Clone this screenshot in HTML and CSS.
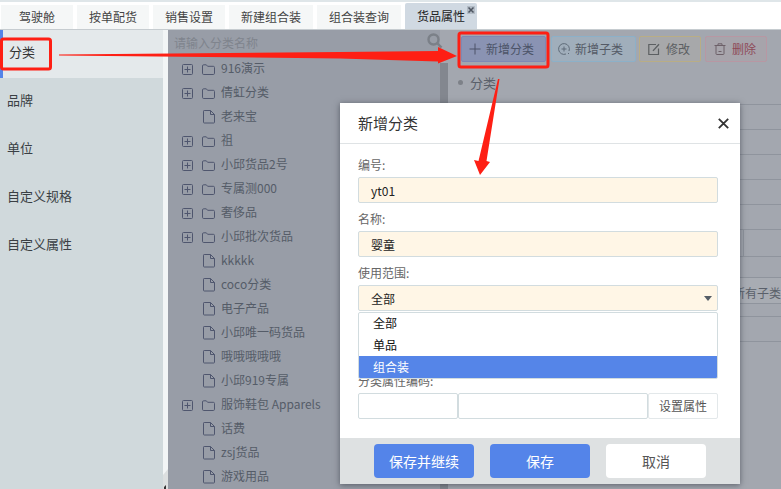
FILE: index.html
```html
<!DOCTYPE html>
<html lang="en">
<head>
  <meta charset="UTF-8">
  <title>货品属性</title>
  <link rel="stylesheet" href="styles.css">
</head>
<body>

  <svg class="defs" width="0" height="0">
    <symbol id="i-plus-box" viewBox="0 0 11 11"><path d="M.5 1.5a1 1 0 0 1 1-1h8a1 1 0 0 1 1 1v8a1 1 0 0 1-1 1h-8a1 1 0 0 1-1-1zM5.5 2.5v6M2.5 5.5h6" fill="none" stroke="#4f566e"/></symbol>
    <symbol id="i-folder" viewBox="0 0 13 11"><path d="M.5 2a1.2 1.2 0 0 1 1.2-1.2h2.6l1.3 1.5h5.7a1.2 1.2 0 0 1 1.2 1.2v5.8a1.2 1.2 0 0 1-1.2 1.2H1.7A1.2 1.2 0 0 1 .5 9.3z" fill="none" stroke="#4f566e"/></symbol>
    <symbol id="i-file" viewBox="0 0 12 14"><path d="M.5 1.2a.7.7 0 0 1 .7-.7h6.3l4 4v7.8a.7.7 0 0 1-.7.7H1.2a.7.7 0 0 1-.7-.7zM7.5.5v4h4" fill="none" stroke="#4f566e"/></symbol>
  </svg>

  <div class="tabs-strip"></div>
  <nav class="tabs">
    <a class="tab">驾驶舱</a>
    <a class="tab">按单配货</a>
    <a class="tab">销售设置</a>
    <a class="tab">新建组合装</a>
    <a class="tab">组合装查询</a>
    <a class="tab active">货品属性
      <svg class="tab-close" width="8" height="8" viewBox="0 0 8 8"><rect width="8" height="8" fill="#b3bcc6"/><path d="M1.5 1.5l5 5M6.5 1.5l-5 5" stroke="#4e5661" stroke-width="1.5"/></svg>
    </a>
  </nav>

  <div class="main">
    <aside class="sidebar">
      <div class="side-item active">分类</div>
      <div class="side-item">品牌</div>
      <div class="side-item">单位</div>
      <div class="side-item">自定义规格</div>
      <div class="side-item">自定义属性</div>
    </aside>
    <div class="splitter">
      <svg class="grip" width="5" height="20" viewBox="0 0 5 20"><path d="M0 6L5 0V20H0z" fill="#dcdfe0"/><path d="M1 18l2-2v4H1z" fill="#333"/></svg>
    </div>

    <section class="tree-panel">
      <div class="tree-search">
        <span class="placeholder">请输入分类名称</span>
        <svg class="search-icon" width="16" height="15" viewBox="0 0 16 15"><circle cx="6.5" cy="6.5" r="5" fill="none" stroke="#7b8088" stroke-width="2.4"/><path d="M10.5 10.5l4 4" stroke="#7b8088" stroke-width="2.4"/></svg>
      </div>
      <ul class="tree">
        <li class="node"><svg class="box"><use href="#i-plus-box"/></svg><svg class="folder"><use href="#i-folder"/></svg><span>916演示</span></li>
        <li class="node"><svg class="box"><use href="#i-plus-box"/></svg><svg class="folder"><use href="#i-folder"/></svg><span>倩虹分类</span></li>
        <li class="node leaf"><svg class="file"><use href="#i-file"/></svg><span>老来宝</span></li>
        <li class="node"><svg class="box"><use href="#i-plus-box"/></svg><svg class="folder"><use href="#i-folder"/></svg><span>祖</span></li>
        <li class="node"><svg class="box"><use href="#i-plus-box"/></svg><svg class="folder"><use href="#i-folder"/></svg><span>小邱货品2号</span></li>
        <li class="node"><svg class="box"><use href="#i-plus-box"/></svg><svg class="folder"><use href="#i-folder"/></svg><span>专属测000</span></li>
        <li class="node"><svg class="box"><use href="#i-plus-box"/></svg><svg class="folder"><use href="#i-folder"/></svg><span>奢侈品</span></li>
        <li class="node"><svg class="box"><use href="#i-plus-box"/></svg><svg class="folder"><use href="#i-folder"/></svg><span>小邱批次货品</span></li>
        <li class="node leaf"><svg class="file"><use href="#i-file"/></svg><span>kkkkk</span></li>
        <li class="node leaf"><svg class="file"><use href="#i-file"/></svg><span>coco分类</span></li>
        <li class="node leaf"><svg class="file"><use href="#i-file"/></svg><span>电子产品</span></li>
        <li class="node leaf"><svg class="file"><use href="#i-file"/></svg><span>小邱唯一码货品</span></li>
        <li class="node leaf"><svg class="file"><use href="#i-file"/></svg><span>哦哦哦哦哦</span></li>
        <li class="node leaf"><svg class="file"><use href="#i-file"/></svg><span>小邱919专属</span></li>
        <li class="node"><svg class="box"><use href="#i-plus-box"/></svg><svg class="folder"><use href="#i-folder"/></svg><span>服饰鞋包 Apparels</span></li>
        <li class="node leaf"><svg class="file"><use href="#i-file"/></svg><span>话费</span></li>
        <li class="node leaf"><svg class="file"><use href="#i-file"/></svg><span>zsj货品</span></li>
        <li class="node leaf"><svg class="file"><use href="#i-file"/></svg><span>游戏用品</span></li>
      </ul>
    </section>
    <div class="scrollbar"><div class="thumb"></div></div>

    <section class="detail">
      <div class="toolbar">
        <button class="tool tool-add">
          <svg width="12" height="12" viewBox="0 0 12 12"><path d="M6 .5v11M.5 6h11" stroke="#4c5368" fill="none"/></svg>新增分类
        </button>
        <button class="tool tool-sub">
          <svg width="12" height="12" viewBox="0 0 12 12"><path d="M11 8A5.4 5.4 0 1 0 8 11M6 3.5v5M3.5 6h5M10 10.500h1" stroke="#5f6b78" fill="none"/></svg>新增子类
        </button>
        <button class="tool tool-edit">
          <svg width="12" height="12" viewBox="0 0 12 12"><path d="M8 1.500H.8v10h9.700V5.500" stroke="#5c5f62" fill="none" stroke-width="1.200"/><path d="M4.500 7.500L10.500.800l1 1L5.500 8.300z" fill="#5c5f62"/></svg>修改
        </button>
        <button class="tool tool-del">
          <svg width="12" height="12" viewBox="0 0 12 12"><path d="M.5 2.500h11M4 2.500V.8h4v1.700M2 2.500v8.200a.8.8 0 0 0 .8.8h6.400a.8.8 0 0 0 .8-.8V2.500M4.500 8.500h3" stroke="#6d6068" fill="none"/></svg>删除
        </button>
      </div>
      <div class="crumb"><i class="dot"></i>分类</div>
      <div class="rows">
        <div class="row"></div>
        <div class="row"></div>
        <div class="row"></div>
        <div class="row"></div>
        <div class="row"></div>
        <div class="row row-split"></div>
        <div class="row row-gap"></div>
        <div class="row row-note">所有子类</div>
        <div class="row row-thin"></div>
        <div class="row"></div>
      </div>
    </section>
  </div>

  <!-- dialog -->
  <div class="modal">
    <header class="modal-head">
      <span>新增分类</span>
      <svg width="11" height="11" viewBox="0 0 11 11"><path d="M.8.800l9.400 9.400M10.200.800L.8 10.200" stroke="#333" stroke-width="1.800"/></svg>
    </header>
    <div class="modal-body">
      <div class="field">
        <label>编号:</label>
        <div class="input">yt01</div>
      </div>
      <div class="field">
        <label>名称:</label>
        <div class="input">婴童</div>
      </div>
      <div class="field select-field">
        <label>使用范围:</label>
        <div class="input select">全部<i class="caret"></i></div>
        <ul class="dropdown">
          <li>全部</li>
          <li>单品</li>
          <li class="selected">组合装</li>
        </ul>
      </div>
      <div class="field">
        <label></label>
        <div class="input blank"></div>
      </div>
      <div class="field">
        <label>分类属性编码:</label>
        <div class="attr-row">
          <div class="input blank attr-code"></div>
          <div class="input blank attr-name"></div>
          <button class="attr-btn">设置属性</button>
        </div>
      </div>
    </div>
    <footer class="modal-foot">
      <button class="btn btn-primary">保存并继续</button>
      <button class="btn btn-primary">保存</button>
      <button class="btn">取消</button>
    </footer>
  </div>

  <!-- red annotations drawn on the screenshot -->
  <svg class="marks" width="781" height="489" viewBox="0 0 781 489">
    <rect x="1.500" y="39" width="49" height="30" rx="2" fill="none" stroke="#fe1f14" stroke-width="3"/>
    <rect x="459" y="33" width="89" height="34" rx="2" fill="none" stroke="#fe1f14" stroke-width="3"/>
    <path d="M59 54.500L340 52L438 51V47L457 56L438 63.500V61.500L340 58.500L59 55.500z" fill="#fe1f14"/>
    <path d="M498 79L499.500 79L486.500 161L490 162L480 175L474 160L478.500 161z" fill="#fe1f14"/>
  </svg>

</body>
</html>
```

FILE: styles.css
```css
* { box-sizing: border-box; }
html, body { height: 100%; }
body {
  margin: 0;
  background: #fff;
  font-family: "Noto Sans CJK SC", "Noto Sans", sans-serif;
  font-size: 12px;
  line-height: 18px;
  color: #333;
  overflow: hidden;
  display: flex;
  flex-direction: column;
  position: relative;
}
ul { list-style: none; margin: 0; padding: 0; }
button { font: inherit; padding: 0; cursor: pointer; }
.defs { position: absolute; }

/* tabs */
.tabs-strip { height: 2px; background: #dfe6e9; flex: none; }
.tabs {
  flex: none;
  height: 28px;
  display: flex;
  align-items: flex-end;
  gap: 4px;
  padding-left: 1px;
  border-bottom: 1px solid #c6ccd0;
}
.tab {
  height: 24px;
  min-width: 72px;
  padding: 0 12px;
  line-height: 23px;
  text-align: center;
  background: #f5f7f7;
  color: #444;
  position: relative;
}
.tab.active {
  height: 26px;
  line-height: 25px;
  background: #d0d9e2;
  color: #222;
  border-radius: 2px 2px 0 0;
}
.tab-close { position: absolute; right: 2px; top: 3px; }

/* main area */
.main { flex: 1; display: flex; min-height: 0; }

.sidebar { width: 163px; flex: none; background: #d0d9dc; color: #3a3f44; }
.side-item {
  height: 48px;
  line-height: 43px;
  font-size: 13px;
  padding-left: 7px;
}
.side-item.active {
  background: #e4e9eb;
  border-left: 3px solid #5484e9;
  padding-left: 6px;
  color: #333;
}
.splitter { width: 5px; flex: none; background: #f2f5f6; display: flex; align-items: flex-end; }
.grip { display: block; }

.tree-panel { width: 272px; flex: none; background: #989da7; color: #555c68; }
.tree-search { height: 27px; padding: 4px 6px 0; position: relative; }
.placeholder { color: #7f848d; }
.search-icon { position: absolute; right: -3px; top: 3px; }
.node {
  height: 24px;
  display: flex;
  align-items: center;
  padding-left: 14px;
}
.node span { white-space: nowrap; margin-top: -2px; }
.box { width: 11px; height: 11px; margin-right: 9px; }
.folder { width: 13px; height: 11px; margin-right: 6px; }
.leaf { padding-left: 35px; }
.file { width: 12px; height: 14px; margin-right: 6px; }

.scrollbar { width: 8px; flex: none; background: #a3a7af; padding-top: 33px; }
.thumb { height: 100%; background: #83878f; }

.detail { flex: 1; min-width: 0; background: #a3a7af; color: #5a606a; overflow: hidden; }
.toolbar { display: flex; padding: 6px 0 0 13px; height: 38px; }
.tool {
  height: 26px;
  display: flex;
  align-items: center;
  gap: 6px;
  border-radius: 2px;
  border: 1px solid;
  margin-right: 4px;
  color: #545a66;
}
.tool svg { flex: none; }
.tool-add { width: 85px; padding-left: 7px; gap: 5px; background: #8a93b3; border-color: #7e89b4; color: #4c5368; }
.tool-sub { width: 85px; padding-left: 6px; gap: 5px; background: #a0aebb; border-color: #8cb0c8; margin-left: 1px; margin-right: 3px; }
.tool-edit { width: 62px; padding-left: 8px; background: #a7a8aa; border-color: #b9ad85; color: #5c5f62; }
.tool-del { width: 62px; padding-left: 8px; background: #a7a4ab; border-color: #b897a3; color: #8e4a58; }

.crumb { height: 28px; padding: 6px 0 0 10px; font-size: 13px; display: flex; align-items: flex-start; gap: 7px; }
.dot { width: 5px; height: 5px; border-radius: 50%; background: #7d8188; margin-top: 6px; }

.rows { border-top: 1px solid #8f949d; margin-top: 8px; }
.row { height: 25px; border-bottom: 1px solid #8f949d; white-space: nowrap; overflow: hidden; }
.row-split { height: 27px; position: relative; }
.row-split::after { content: ""; position: absolute; top: 0; bottom: 0; left: 295px; border-left: 1px solid #8f949d; }
.row-gap { height: 21px; }
.row-note { height: 26px; padding-left: 285px; line-height: 29px; background: #a8acb3; }
.row-thin { height: 13px; }

/* dialog */
.modal {
  position: absolute;
  left: 340px;
  top: 103px;
  width: 400px;
  height: 381px;
  background: #fff;
  box-shadow: 0 1px 6px rgba(30, 35, 45, .55);
  display: flex;
  flex-direction: column;
}
.modal-head {
  flex: none;
  height: 41px;
  padding: 0 11px 0 18px;
  border-bottom: 1px solid #dfe3e5;
  display: flex;
  align-items: center;
  justify-content: space-between;
  font-size: 15px;
  color: #333;
}
.modal-body { flex: 1; padding: 5px 22px 0 18px; min-height: 0; }
.field { position: relative; }
.field label { display: block; height: 28px; padding-top: 7px; color: #666; }
.input {
  height: 26px;
  line-height: 25px;
  padding: 0 12px;
  background: #fff6e6;
  border: 1px solid #d2dcdf;
  border-radius: 2px;
  color: #222;
  position: relative;
}
.blank { background: #fff; }
.caret {
  position: absolute;
  right: 5px;
  top: 10px;
  border-style: solid;
  border-width: 5px 4px 0;
  border-color: #555d66 transparent transparent;
}
.dropdown {
  position: absolute;
  left: 0;
  right: 0;
  top: 55px;
  height: 67px;
  background: #fff;
  border: 1px solid #d2dcdf;
  border-radius: 2px;
  z-index: 2;
  overflow: hidden;
  color: #111;
}
.dropdown li { height: 22px; line-height: 22px; padding-left: 14px; }
.dropdown li:first-child { height: 21px; line-height: 20px; }
.dropdown .selected { background: #5585e8; color: #fff; }
.attr-row { display: flex; }
.attr-code { width: 100px; }
.attr-name { width: 190px; }
.attr-btn {
  width: 70px;
  height: 26px;
  background: #fff;
  border: 1px solid #e3e8ea;
  border-radius: 2px;
  color: #555;
}
.modal-foot {
  flex: none;
  height: 46px;
  background: #dee1e2;
  display: flex;
  gap: 16px;
  padding: 6px 0 0 34px;
}
.btn {
  width: 100px;
  height: 34px;
  border: 0;
  border-radius: 4px;
  background: #fff;
  color: #555;
  font-size: 14px;
}
.btn-primary { background: #5484e9; color: #fff; }

.marks { position: absolute; left: 0; top: 0; pointer-events: none; }
```
